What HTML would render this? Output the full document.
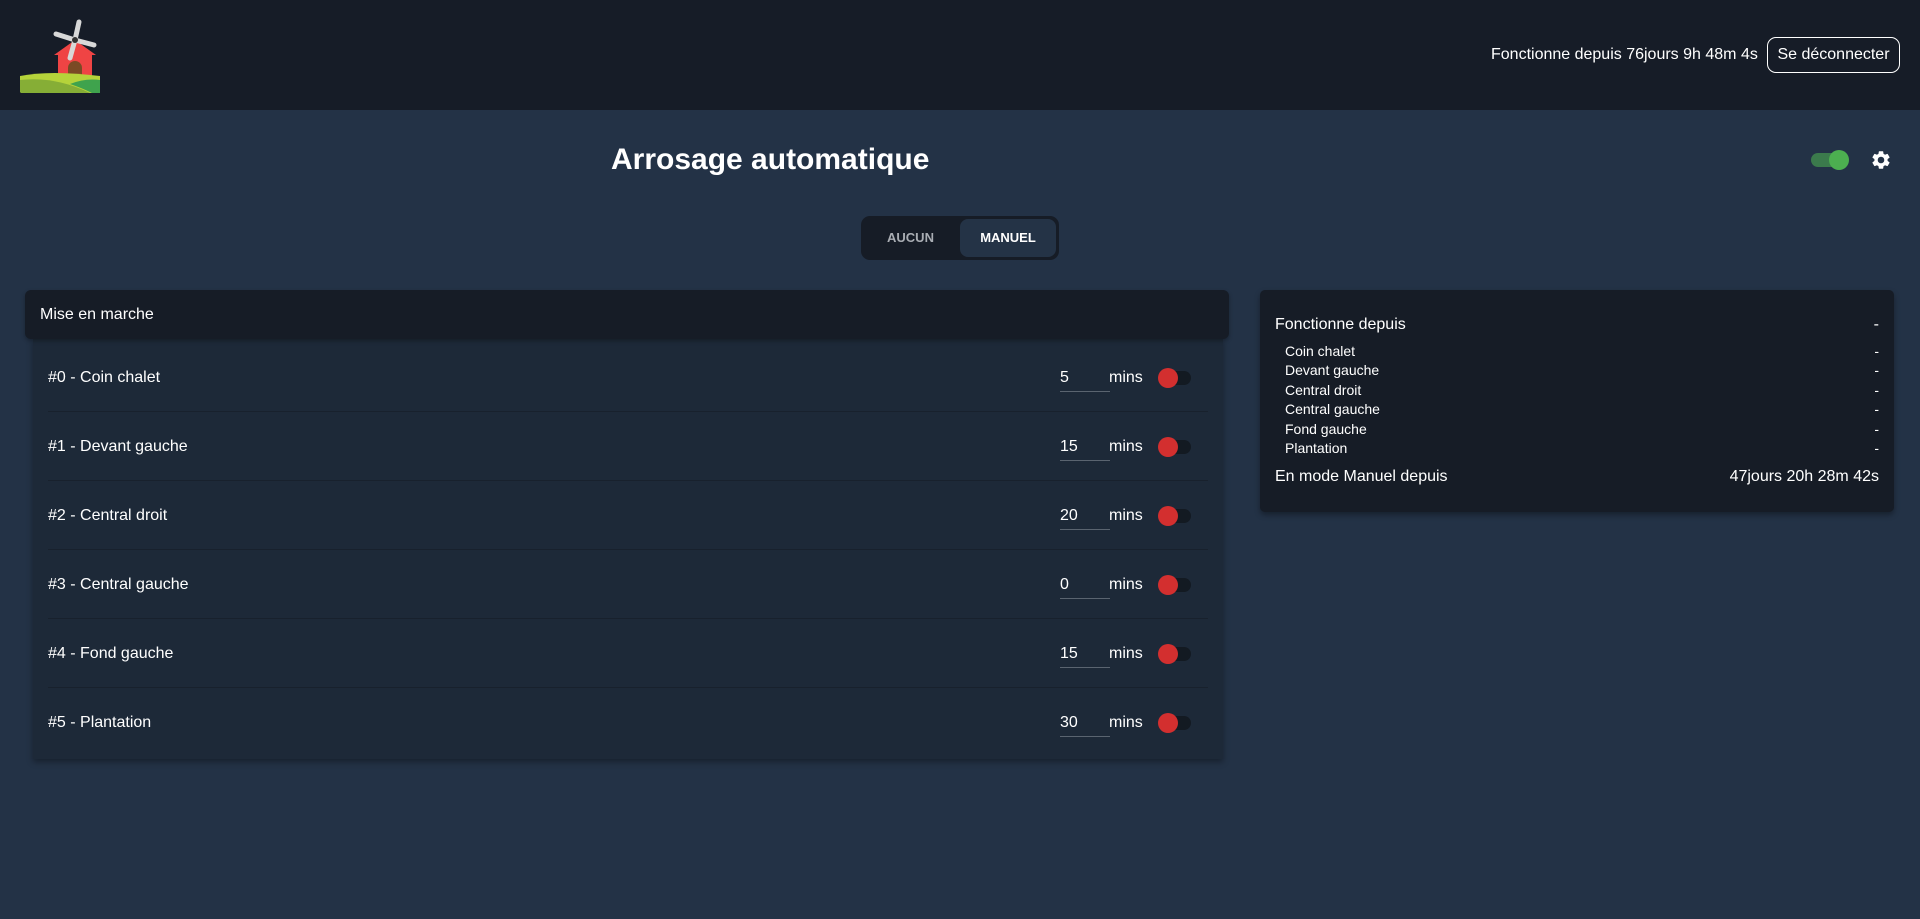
<!DOCTYPE html>
<html><head><meta charset="utf-8"><style>
*{box-sizing:border-box;margin:0;padding:0}
body{width:1920px;height:919px;background:#233246;font-family:"Liberation Sans",sans-serif;color:#fff;position:relative;overflow:hidden}
.hdr{position:absolute;left:0;top:0;width:1920px;height:110px;background:#161c27}
.abs{position:absolute}
.btn{position:absolute;left:1767px;top:37px;width:133px;height:36px;border:1px solid #fff;border-radius:9px;font-size:16px;line-height:34px;text-align:center}
.title{position:absolute;left:611px;width:320px;top:143px;font-size:30px;font-weight:bold;white-space:nowrap}
.tabs{position:absolute;left:861px;top:216px;width:198px;height:44px;background:#161c26;border-radius:9px}
.tab1{position:absolute;left:0;top:0;width:99px;height:44px;line-height:44px;text-align:center;font-size:13px;font-weight:bold;color:#a9adb3}
.tab2{position:absolute;left:99px;top:3px;width:96px;height:38px;line-height:38px;text-align:center;font-size:13px;font-weight:bold;background:#243346;border-radius:8px}
.lh{position:absolute;left:25px;top:290px;width:1204px;height:49px;background:#161c26;border-radius:6px;font-size:16px;line-height:49px;padding-left:15px;box-shadow:0 2px 4px rgba(0,0,0,.3)}
.lb{position:absolute;left:33px;top:339px;width:1190px;height:420px;background:#1d2938;box-shadow:0 3px 6px rgba(0,0,0,.35)}
.row{position:absolute;left:15px;width:1160px;height:69px;font-size:16px}
.row .n{position:absolute;left:0;top:0;line-height:69px}
.row .v{position:absolute;left:1012px;top:0;line-height:69px;width:50px;}
.row .u{position:absolute;left:1012px;top:48px;width:50px;height:1px;background:#5a6470}
.row .m{position:absolute;left:1061px;line-height:69px}
.row .t{position:absolute;left:1113px;top:28px;width:30px;height:14px;border-radius:7px;background:#131a22}
.row .d{position:absolute;left:1110px;top:25px;width:20px;height:20px;border-radius:50%;background:#d32f2f}
.row .sep{position:absolute;left:0;bottom:0;width:1160px;height:1px;background:#18212d}
.rc{position:absolute;left:1260px;top:290px;width:634px;height:222px;background:#161c26;border-radius:5px;box-shadow:0 3px 6px rgba(0,0,0,.35)}
.l{position:absolute;left:15px;right:15px;display:flex;justify-content:space-between}
</style></head><body>
<div class="hdr">
<svg class="abs" style="left:0;top:0" width="110" height="100" viewBox="0 0 110 100">
<polygon points="54,55 75,40 96,55 92,55 92,80 58,80 58,55" fill="#ef4444"/>
<path d="M68 80 V68 a7 7 0 0 1 14 0 V80 z" fill="#7a4a25"/>
<path d="M20 76 Q50 70 100 76 V92 Q100 93 98 93 H22 Q20 93 20 91 z" fill="#b5d33a"/>
<path d="M20 80 Q55 76 90 93 H22 Q20 93 20 91 z" fill="#86ae36"/>
<path d="M70 84 Q85 78 100 80 V93 H92 Q82 88 70 84z" fill="#3fa34d"/>
<g stroke="#d8d8d8" stroke-width="5" stroke-linecap="round"><line x1="75" y1="40" x2="79" y2="22"/><line x1="75" y1="40" x2="56" y2="34"/><line x1="75" y1="40" x2="94" y2="45"/><line x1="75" y1="40" x2="70" y2="58"/></g>
<circle cx="75" cy="40" r="3" fill="#333"/>
</svg>
<div class="abs" style="left:1491px;top:45px;font-size:16px;line-height:20px">Fonctionne depuis 76jours 9h 48m 4s</div>
<div class="btn">Se déconnecter</div>
</div>
<div class="title">Arrosage automatique</div>
<div class="abs" style="left:1811px;top:153px;width:36px;height:14px;border-radius:7px;background:#3b7a4c"></div>
<div class="abs" style="left:1829px;top:150px;width:20px;height:20px;border-radius:50%;background:#4caf50"></div>
<svg class="abs" style="left:1870px;top:149px" width="22" height="22" viewBox="0 0 24 24"><path fill="#fff" d="M19.14 12.94c.04-.3.06-.61.06-.94s-.02-.64-.07-.94l2.03-1.58a.49.49 0 0 0 .12-.61l-1.920-3.32a.49.49 0 0 0-.59-.22l-2.39.96c-.5-.38-1.03-.7-1.62-.94l-.36-2.54a.48.48 0 0 0-.48-.41h-3.84a.48.48 0 0 0-.47.41l-.36 2.54c-.59.24-1.13.57-1.62.94l-2.39-.96a.48.48 0 0 0-.59.22L2.74 8.87a.47.47 0 0 0 .12.61l2.03 1.58c-.05.3-.09.63-.09.94s.02.64.07.94l-2.03 1.58a.49.49 0 0 0-.12.61l1.92 3.32c.12.22.37.29.59.22l2.39-.96c.5.38 1.03.7 1.62.94l.36 2.54c.05.24.24.41.48.41h3.84c.24 0 .44-.17.47-.41l.36-2.54c.59-.24 1.13-.56 1.62-.94l2.39.96c.22.08.47 0 .59-.22l1.92-3.32a.47.47 0 0 0-.12-.61l-2.010-1.58zM12 15.6A3.6 3.6 0 1 1 12 8.4a3.6 3.6 0 0 1 0 7.2z"/></svg>
<div class="tabs"><div class="tab1">AUCUN</div><div class="tab2">MANUEL</div></div>
<div class="lb">
<div class="row" style="top:4px"><div class="n">#0 - Coin chalet</div><div class="v">5</div><div class="u"></div><div class="m">mins</div><div class="t"></div><div class="d"></div><div class="sep"></div></div>
<div class="row" style="top:73px"><div class="n">#1 - Devant gauche</div><div class="v">15</div><div class="u"></div><div class="m">mins</div><div class="t"></div><div class="d"></div><div class="sep"></div></div>
<div class="row" style="top:142px"><div class="n">#2 - Central droit</div><div class="v">20</div><div class="u"></div><div class="m">mins</div><div class="t"></div><div class="d"></div><div class="sep"></div></div>
<div class="row" style="top:211px"><div class="n">#3 - Central gauche</div><div class="v">0</div><div class="u"></div><div class="m">mins</div><div class="t"></div><div class="d"></div><div class="sep"></div></div>
<div class="row" style="top:280px"><div class="n">#4 - Fond gauche</div><div class="v">15</div><div class="u"></div><div class="m">mins</div><div class="t"></div><div class="d"></div><div class="sep"></div></div>
<div class="row" style="top:349px"><div class="n">#5 - Plantation</div><div class="v">30</div><div class="u"></div><div class="m">mins</div><div class="t"></div><div class="d"></div></div>
</div>
<div class="lh">Mise en marche</div>
<div class="rc">
<div class="l" style="top:26px;font-size:16px"><span>Fonctionne depuis</span><span>-</span></div>
<div class="l" style="top:53px;font-size:14px;padding-left:10px"><span>Coin chalet</span><span>-</span></div>
<div class="l" style="top:72px;font-size:14px;padding-left:10px"><span>Devant gauche</span><span>-</span></div>
<div class="l" style="top:92px;font-size:14px;padding-left:10px"><span>Central droit</span><span>-</span></div>
<div class="l" style="top:111px;font-size:14px;padding-left:10px"><span>Central gauche</span><span>-</span></div>
<div class="l" style="top:131px;font-size:14px;padding-left:10px"><span>Fond gauche</span><span>-</span></div>
<div class="l" style="top:150px;font-size:14px;padding-left:10px"><span>Plantation</span><span>-</span></div>
<div class="l" style="top:178px;font-size:16px"><span>En mode Manuel depuis</span><span>47jours 20h 28m 42s</span></div>
</div>
</body></html>
